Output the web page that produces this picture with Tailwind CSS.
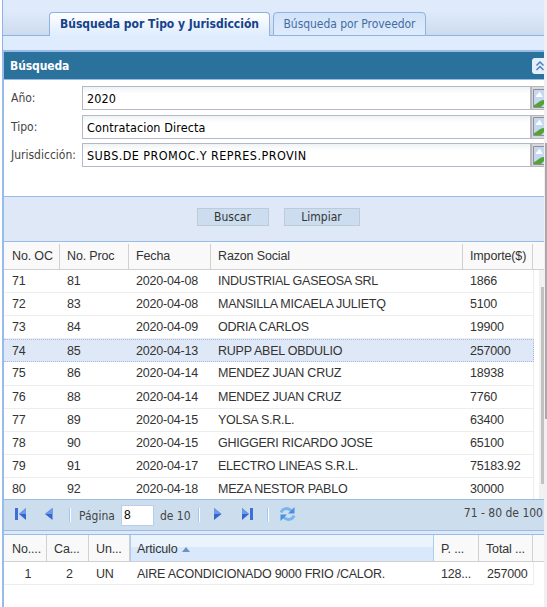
<!DOCTYPE html>
<html lang="es">
<head>
    <meta charset="UTF-8">
    <meta name="viewport" content="width=device-width, initial-scale=1.0">
    <title>Búsqueda por Tipo y Jurisdicción</title>
    <script src="https://cdn.jsdelivr.net/npm/@tailwindcss/browser@4"></script>
</head>
<body class="relative flex h-[607px] w-[547px] overflow-hidden bg-[#f0f0f0] font-['DejaVu_Sans_Condensed','DejaVu_Sans',sans-serif] text-[12px] text-[#444]">
    <main class="flex h-full w-[544px] flex-col overflow-hidden bg-white pl-[2px]">

        <!-- Tabs -->
        <div class="flex h-[36px] shrink-0 items-end border-l border-[#8db2e3] bg-linear-to-b from-[#dfebfb] from-30% to-[#ccdaee]">
            <div class="h-[36px] w-[46px] border-b border-[#8db2e3]"></div>
            <div class="flex h-[24px] w-[221px] items-center justify-center rounded-t-[4px] border border-b-0 border-[#8db2e3] bg-linear-to-b from-white to-[#deecfd] pb-[1px] text-[12px] font-bold whitespace-nowrap text-[#15428b]"><span>Búsqueda por Tipo y Jurisdicción</span></div>
            <div class="h-[36px] w-[3px] border-b border-[#8db2e3]"></div>
            <div class="flex h-[24px] w-[153px] items-center justify-center rounded-t-[4px] border border-[#8db2e3] bg-linear-to-b from-[#d2e2f7] to-[#deecfd] whitespace-nowrap text-[#416da3]"><span class="tracking-[-0.05px]">Búsqueda por Proveedor</span></div>
            <div class="h-[36px] flex-1 border-b border-[#8db2e3]"></div>
        </div>
        <div class="h-[14px] shrink-0 border-l border-[#8db2e3] bg-[#deecfd]"></div>

        <div class="flex flex-1 flex-col border-t-2 border-l-2 border-[#99bbe8]">
            <!-- Search panel -->
            <div class="flex h-[28px] shrink-0 items-center justify-between border-b border-[#99bbe8] bg-[#2a719c] pl-[6px] font-bold text-white">
                <span class="tracking-[-0.1px]">Búsqueda</span>
                <svg class="h-[16px] w-[12px]" viewBox="0 0 12 16">
                    <rect x="0" y="0" width="16" height="16" rx="3" fill="#e4effb"/>
                    <path d="M4.500 7.500l3.500-3.500 3.500 3.500M4.500 12l3.500-3.500 3.500 3.500" fill="none" stroke="#4a7fc0" stroke-width="1.500"/>
                </svg>
            </div>
            <form id="fields" class="flex h-[117px] shrink-0 flex-col border-b border-[#99bbe8] bg-white pt-[6px]"></form>

            <!-- Buttons -->
            <div class="flex h-[45px] shrink-0 justify-center gap-[15px] border-b border-[#99bbe8] bg-[#dfe8f6] pt-[11px] pl-[8px]">
                <button type="button" class="h-[18px] w-[72px] border border-[#bccbd6] bg-[#cbddee] text-[12px] leading-[16px] text-[#333]">Buscar</button>
                <button type="button" class="h-[18px] w-[76px] border border-[#bccbd6] bg-[#cbddee] text-[12px] leading-[16px] text-[#333]">Limpiar</button>
            </div>

            <!-- Orders grid -->
            <div class="flex h-[28px] shrink-0 border-b border-[#d0d0d0] bg-[#f9f9f9] pt-[2px] font-['Liberation_Sans',Arial,sans-serif] text-[12.500px] leading-[24px] tracking-[-0.15px] text-[#333]">
                <div class="w-[56px] border-r border-[#d0d0d0] pl-[8px]">No. OC</div>
                <div class="w-[69px] border-r border-[#d0d0d0] pl-[7px]">No. Proc</div>
                <div class="w-[82px] border-r border-[#d0d0d0] pl-[7px]">Fecha</div>
                <div class="w-[252px] border-r border-[#d0d0d0] pl-[7px]">Razon Social</div>
                <div class="w-[70px] border-r border-[#d0d0d0] pl-[7px]">Importe($)</div>
            </div>
            <div class="flex h-[229px] shrink-0 overflow-hidden">
                <div id="orders" class="w-[530px] font-['Liberation_Sans',Arial,sans-serif] text-[12.500px] tracking-[-0.2px] text-[#333]"></div>
                <div class="ml-auto w-[5px] bg-[#f1f1f1] pt-[17px] pl-[2px]">
                    <div class="h-[197px] bg-[#c1c1c1]"></div>
                </div>
            </div>

            <!-- Paging toolbar -->
            <div class="flex h-[32px] shrink-0 items-center border-y border-[#99bbe8] bg-[#ccdeee] whitespace-nowrap">
                <svg class="mb-[2px] ml-[11px] h-[14px] w-[12px]" viewBox="0 0 12 14"><path d="M0 1h3v12H0z" fill="#3d6fd6"/><path d="M11 1v12L4 7z" fill="#3465d0"/><path d="M11 1v6H4z" fill="#6d9ae6"/></svg>
                <svg class="mb-[2px] ml-[18px] h-[14px] w-[8px]" viewBox="0 0 8 14"><path d="M7.500 1v12L0 7z" fill="#3465d0"/><path d="M7.500 1v6H0z" fill="#6d9ae6"/></svg>
                <div class="ml-[16px] h-[14px] w-[2px] border-l border-[#98c8ff] bg-white"></div>
                <span class="mt-[2px] ml-[8px] text-[12px]">Página</span>
                <input type="text" value="8" class="ml-[6px] h-[21px] w-[33px] border border-[#b5d0e8] bg-white pl-[2px] font-['Liberation_Sans',Arial,sans-serif] text-[12px] text-black">
                <span class="mt-[2px] ml-[6px] text-[12px]">de 10</span>
                <div class="ml-[7px] h-[14px] w-[2px] border-l border-[#98c8ff] bg-white"></div>
                <svg class="mb-[2px] ml-[14px] h-[14px] w-[8px]" viewBox="0 0 8 14"><path d="M0 1v12l7.500-6z" fill="#3465d0"/><path d="M0 1v6h7.500z" fill="#6d9ae6"/></svg>
                <svg class="mb-[2px] ml-[19px] h-[14px] w-[12px]" viewBox="0 0 12 14"><path d="M9 1h3v12H9z" fill="#3d6fd6"/><path d="M1 1v12l7-6z" fill="#3465d0"/><path d="M1 1v6h7z" fill="#6d9ae6"/></svg>
                <div class="ml-[14px] h-[14px] w-[2px] border-l border-[#98c8ff] bg-white"></div>
                <svg class="mb-[2px] ml-[10px] h-[16px] w-[17px]" viewBox="0 0 17 16"><path d="M2 6.500C3.500 2 9 1 12.500 5" fill="none" stroke="#78b4ee" stroke-width="2.800"/><path d="M15.500 1v6.500H9z" fill="#4a90e0"/><path d="M15 9.500C13.500 14 8 15 4.500 11" fill="none" stroke="#78b4ee" stroke-width="2.800"/><path d="M1.500 15V8.500H8z" fill="#4a90e0"/></svg>
                <span class="mr-[1px] mb-[4px] ml-auto text-[12px]">71 - 80 de 100</span>
            </div>
            <div class="h-[3px] shrink-0 bg-[#dfe8f6]"></div>

            <!-- Items grid -->
            <div class="flex h-[28px] shrink-0 border-t border-b border-t-[#99bbe8] border-b-[#d0d0d0] bg-[#f9f9f9] font-['Liberation_Sans',Arial,sans-serif] text-[12.500px] leading-[28px] tracking-[-0.15px] text-[#333]">
                <div class="w-[43px] border-r border-[#d0d0d0] pl-[8px]">No....</div>
                <div class="w-[42px] border-r border-[#d0d0d0] pl-[7px]">Ca...</div>
                <div class="w-[41px] border-r border-[#d0d0d0] pl-[7px]">Un...</div>
                <div class="flex w-[304px] items-center border-x border-[#aaccf6] bg-linear-to-b from-[#ebf3fd] from-45% to-[#d9e8fb] to-45% pt-[2px] pl-[6px]">
                    Articulo
                    <svg class="ml-[5px] h-[5px] w-[8px]" viewBox="0 0 8 5"><path d="M4 0l4 5H0z" fill="#6c93c7"/></svg>
                </div>
                <div class="w-[45px] border-r border-[#d0d0d0] pl-[7px]">P. ...</div>
                <div class="w-[54px] border-r border-[#d0d0d0] pl-[7px]">Total ...</div>
            </div>
            <div class="flex h-[23px] w-[530px] shrink-0 border-r border-b border-[#ededed] font-['Liberation_Sans',Arial,sans-serif] text-[12.500px] leading-[24px] tracking-[-0.2px] whitespace-nowrap text-[#333]">
                <div class="w-[43px] pl-[5px] text-center">1</div>
                <div class="w-[42px] pl-[3px] text-center">2</div>
                <div class="w-[41px] pl-[7px]">UN</div>
                <div class="w-[304px] pl-[7px] tracking-[-0.25px]">AIRE ACONDICIONADO 9000 FRIO /CALOR.</div>
                <div class="w-[45px] pl-[7px]">128...</div>
                <div class="w-[54px] pl-[8px]">257000</div>
            </div>
        </div>
    </main>

    <!-- Page scrollbar -->
    <div class="absolute top-[143px] left-[545px] h-[276px] w-[2px] bg-[#a9a9a9]"></div>

    <script>
        const fields = [
            ['Año:', '2020', 'tracking-[0.1px]'],
            ['Tipo:', 'Contratacion Directa', 'tracking-[0.1px]'],
            ['Jurisdicción:', 'SUBS.DE PROMOC.Y REPRES.PROVIN', 'tracking-[0.43px]']
        ];

        const orders = [
            [71, 81, '2020-04-08', 'INDUSTRIAL GASEOSA SRL', '1866'],
            [72, 83, '2020-04-08', 'MANSILLA MICAELA JULIETQ', '5100'],
            [73, 84, '2020-04-09', 'ODRIA CARLOS', '19900'],
            [74, 85, '2020-04-13', 'RUPP ABEL OBDULIO', '257000'],
            [75, 86, '2020-04-14', 'MENDEZ JUAN CRUZ', '18938'],
            [76, 88, '2020-04-14', 'MENDEZ JUAN CRUZ', '7760'],
            [77, 89, '2020-04-15', 'YOLSA S.R.L.', '63400'],
            [78, 90, '2020-04-15', 'GHIGGERI RICARDO JOSE', '65100'],
            [79, 91, '2020-04-17', 'ELECTRO LINEAS S.R.L.', '75183.92'],
            [80, 92, '2020-04-18', 'MEZA NESTOR PABLO', '30000']
        ];

        document.getElementById('fields').innerHTML = fields.map(([label, value, tracking]) => `
            <div class="mb-[4.500px] flex h-[24px] shrink-0">
                <label class="w-[78px] pl-[7px] leading-[24px] whitespace-nowrap">${label}</label>
                <div class="h-[24px] w-[449px] border border-[#b5b8c8] bg-linear-to-b from-[#eff3f5] to-white to-30% pl-[4px] text-[12.500px] leading-[23px] text-black ${tracking}">${value}</div>
                <div class="flex h-[24px] w-[13px] items-center overflow-hidden border border-r-0 border-[#b5b5bb] bg-[#d8d8dc] pl-[1px]">
                    <svg class="h-[19px] w-[12px] shrink-0" viewBox="0 0 12 19"><path d="M1 1h11v17H1z" fill="#c4d8f4"/><path d="M3 8c0-3 2-2 3-5 2 0 2 3 4 5z" fill="#fff"/><path d="M1 18v-2c4-1 5-5 11-5v3l-4 4z" fill="#55a238"/><path d="M12 .500H.5v18H12" fill="none" stroke="#909090"/></svg>
                </div>
            </div>`).join('');

        document.getElementById('orders').innerHTML = orders.map(([oc, proc, fecha, razon, importe]) => {
            let row = 'flex h-[23px] items-center border-r border-b border-[#ededed]';
            if (oc === 74) row = 'flex h-[23px] items-center border-y border-r border-dotted border-[#a3bae9] bg-[#dfe8f6] pt-[2px]';
            if (oc === 75) row = 'flex h-[24px] items-center border-r border-b border-[#ededed]';
            return `
            <div class="${row}">
                <div class="w-[56px] pl-[8px]">${oc}</div>
                <div class="w-[69px] pl-[7px]">${proc}</div>
                <div class="w-[82px] pl-[7px]">${fecha}</div>
                <div class="w-[252px] pl-[7px] tracking-[-0.25px] whitespace-nowrap">${razon}</div>
                <div class="w-[70px] pl-[7px]">${importe}</div>
            </div>`;
        }).join('');
    </script>
</body>
</html>
